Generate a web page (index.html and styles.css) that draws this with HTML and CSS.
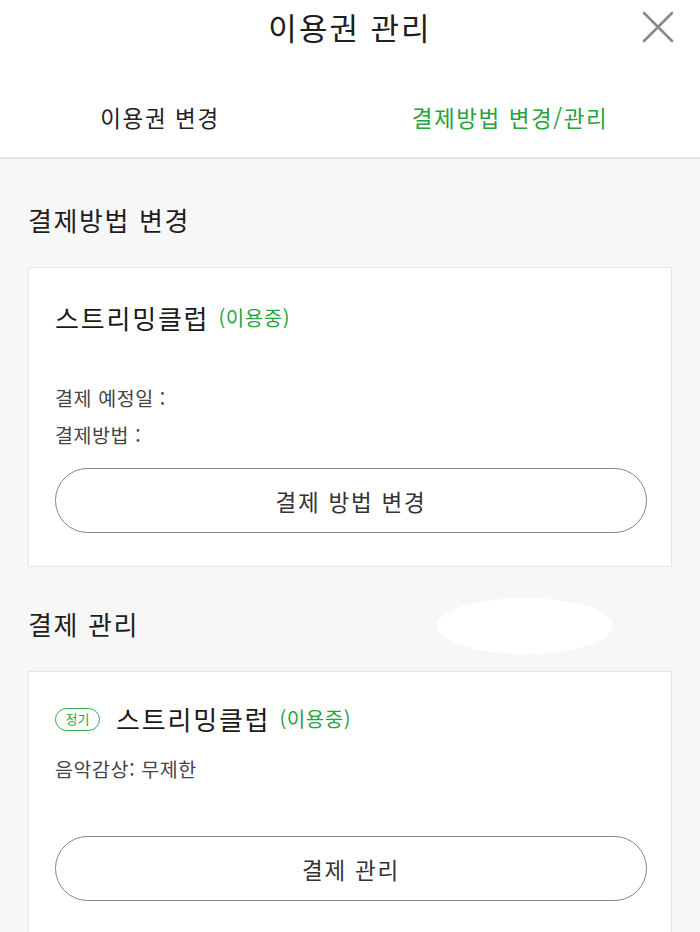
FILE: index.html
```html
<!DOCTYPE html>
<html lang="ko">
<head>
<meta charset="utf-8">
<title>이용권 관리</title>
<link rel="stylesheet" href="styles.css">
</head>
<body>
<div class="top">
  <header class="header">
    <h1 class="title">이용권 관리</h1>
    <svg class="close" width="32" height="32" viewBox="0 0 32 32" aria-label="닫기">
      <path d="M2 2 L30 30 M30 2 L2 30" stroke="#8a8a8a" stroke-width="2.6" stroke-linecap="round" fill="none"/>
    </svg>
  </header>
  <nav class="tabs">
    <div class="tab">이용권 변경</div>
    <div class="tab active">결제방법 변경/관리</div>
  </nav>
</div>

<main class="content">
  <section class="section">
    <h2 class="heading">결제방법 변경</h2>
    <div class="card">
      <div class="card-title">스트리밍클럽 <span class="status">(이용중)</span></div>
      <div class="info blank"></div>
      <div class="info">결제 예정일 :</div>
      <div class="info">결제방법 :</div>
      <button class="btn">결제 방법 변경</button>
    </div>
  </section>

  <section class="section">
    <div class="heading-row">
      <h2 class="heading">결제 관리</h2>
      <div class="blob"></div>
    </div>
    <div class="card card-last">
      <div class="card-title"><span class="badge">정기</span>스트리밍클럽 <span class="status">(이용중)</span></div>
      <div class="info first">음악감상: 무제한</div>
      <div class="info blank short"></div>
      <button class="btn">결제 관리</button>
    </div>
  </section>
</main>
</body>
</html>
```

FILE: styles.css
```css
* { box-sizing: border-box; }
html, body {
  margin: 0;
  padding: 0;
}
body {
  width: 700px;
  height: 932px;
  overflow: hidden;
  background: #f7f7f7;
  font-family: "Noto Sans CJK KR", "Noto Sans", sans-serif;
  color: #1e1e1e;
}

.top {
  background: #ffffff;
  border-bottom: 2px solid #e4e4e4;
}
.header {
  position: relative;
  height: 58px;
  display: flex;
  align-items: center;
  justify-content: center;
}
.title {
  margin: 0;
  font-size: 31px;
  font-weight: 400;
  letter-spacing: 2px;
  line-height: 40px;
  margin-top: -4px;
}
.close {
  position: absolute;
  right: 26px;
  top: 11px;
}

.tabs {
  display: flex;
  height: 99px;
  margin: 0 15px 0 -15px;
  align-items: center;
  padding-top: 18px;
}
.tab {
  flex: 1;
  text-align: center;
  font-size: 22.5px;
  letter-spacing: 1.6px;
  color: #222;
}
.tab.active {
  color: #22a53c;
}

.content {
  padding: 44px 28px 0 28px;
}
.section + .section {
  margin-top: 40px;
}
.heading {
  margin: 0;
  font-size: 26px;
  font-weight: 400;
  letter-spacing: 1.6px;
  line-height: 34px;
  color: #1e1e1e;
}
.heading-row {
  position: relative;
}
.blob {
  position: absolute;
  left: 409px;
  top: -9px;
  width: 176px;
  height: 56px;
  border-radius: 50%;
  background: #ffffff;
}

.card {
  margin-top: 30px;
  background: #ffffff;
  border: 1px solid #e6e6e6;
  padding: 33px 24px 33px 26px;
}
.card-last {
  padding-top: 30px;
  padding-bottom: 40px;
}
.card-title {
  display: flex;
  align-items: center;
  font-size: 26px;
  line-height: 34px;
  letter-spacing: 1.8px;
  color: #1a1a1a;
  white-space: pre;
}
.status {
  font-size: 20px;
  color: #22a53c;
  letter-spacing: 0.6px;
}
.badge {
  display: inline-flex;
  align-items: center;
  justify-content: center;
  width: 45px;
  height: 23px;
  border: 1.6px solid #2fae48;
  border-radius: 12px;
  font-size: 13px;
  color: #22a53c;
  letter-spacing: 0;
  margin-right: 16px;
}
.info {
  font-size: 19.5px;
  line-height: 37px;
  color: #444;
  letter-spacing: 0.6px;
}
.info.blank {
  height: 44px;
}
.info.blank.short {
  height: 34px;
}
.info.first {
  margin-top: 14px;
}
.btn {
  display: block;
  width: 100%;
  height: 65px;
  margin-top: 15px;
  background: #ffffff;
  border: 1.6px solid #858585;
  border-radius: 33px;
  font-family: inherit;
  font-size: 22.5px;
  letter-spacing: 1.8px;
  color: #333;
}
```
